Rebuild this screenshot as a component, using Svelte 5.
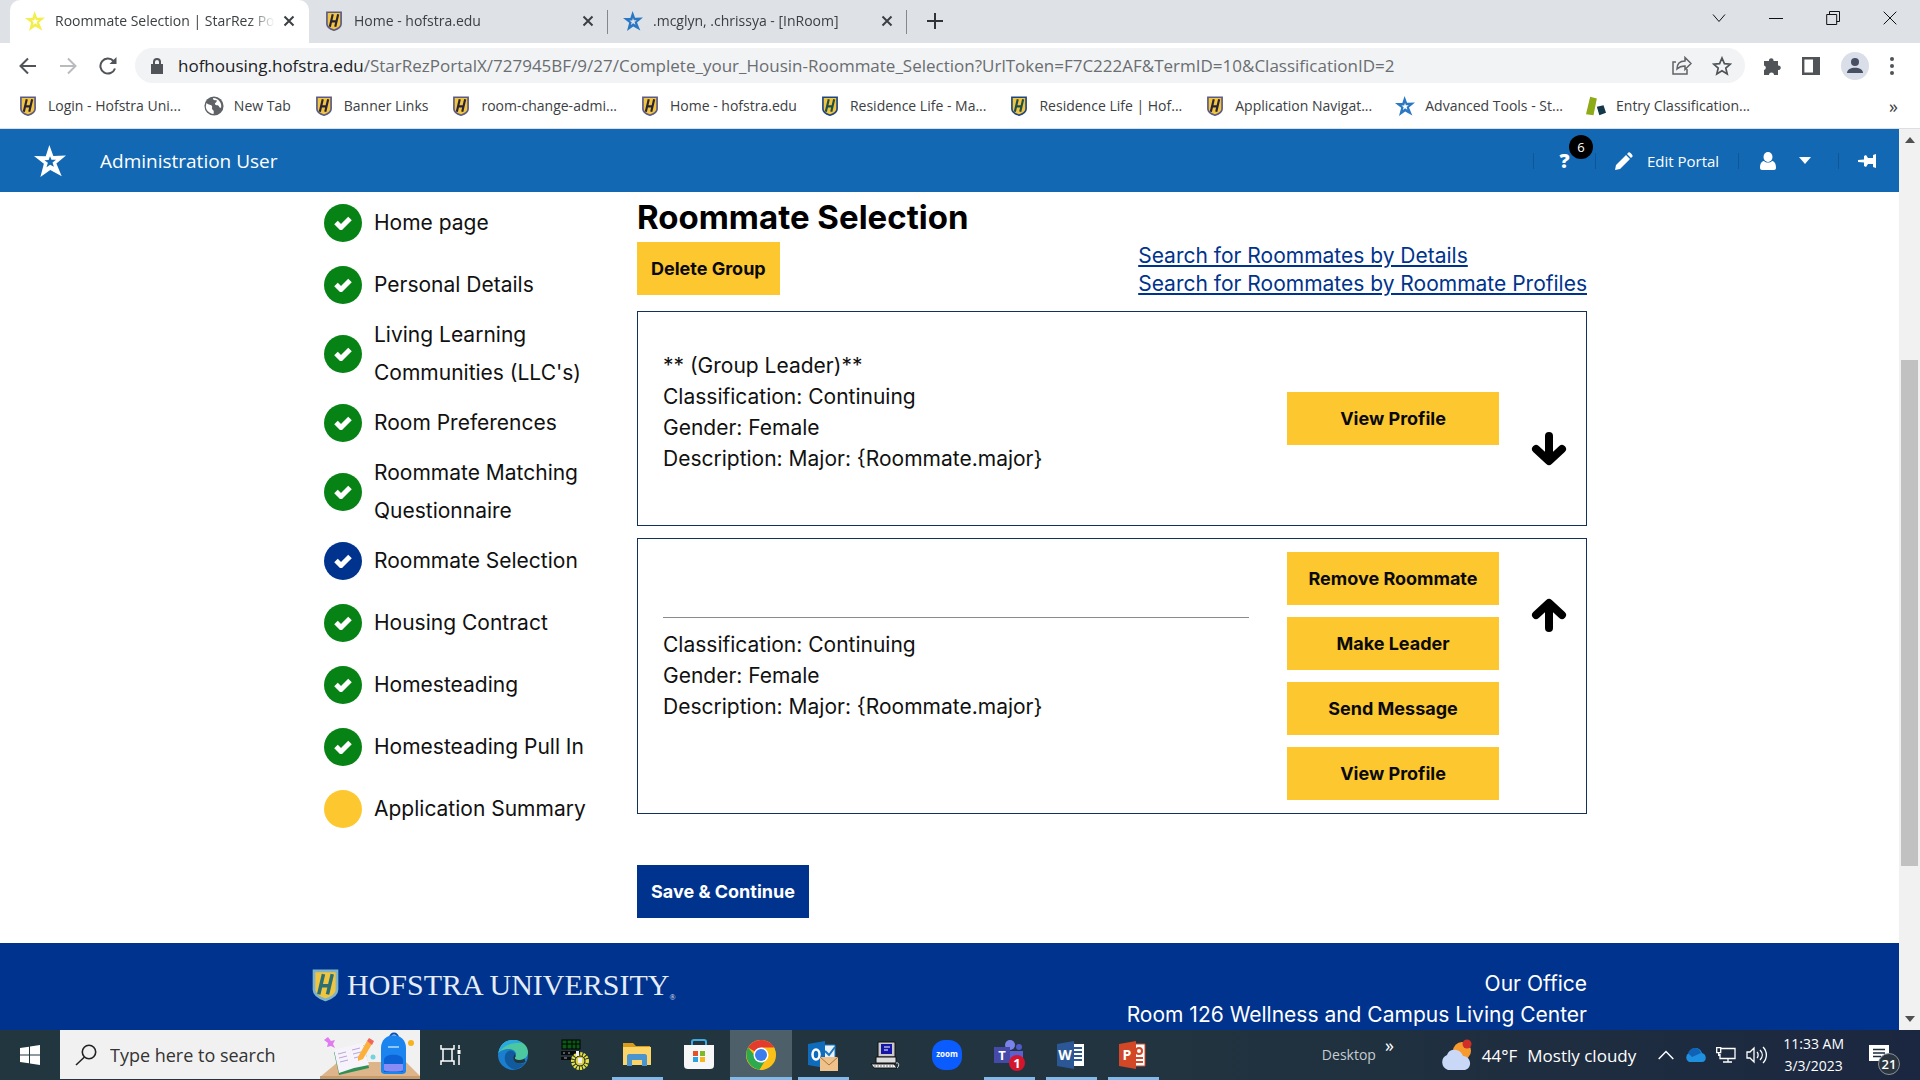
<script>
  /**
   * Housing portal — roommate selection step, shown in a desktop browser
   * window with the taskbar docked under it.
   */
  const tabs = [
    { title: 'Roommate Selection | StarRez Po', icon: 'star-yellow', active: true },
    { title: 'Home - hofstra.edu', icon: 'shield' },
    { title: '.mcglyn, .chrissya - [InRoom]', icon: 'star-blue' },
  ];

  const bookmarks = [
    { label: 'Login - Hofstra Uni...', icon: 'shield' },
    { label: 'New Tab', icon: 'globe' },
    { label: 'Banner Links', icon: 'shield' },
    { label: 'room-change-admi...', icon: 'shield' },
    { label: 'Home - hofstra.edu', icon: 'shield' },
    { label: 'Residence Life - Ma...', icon: 'shield-blue' },
    { label: 'Residence Life | Hof...', icon: 'shield-blue' },
    { label: 'Application Navigat...', icon: 'shield' },
    { label: 'Advanced Tools - St...', icon: 'star-blue' },
    { label: 'Entry Classification...', icon: 'blocks' },
  ];

  const steps = [
    { label: 'Home page', state: 'done' },
    { label: 'Personal Details', state: 'done' },
    { label: "Living Learning Communities (LLC's)", state: 'done' },
    { label: 'Room Preferences', state: 'done' },
    { label: 'Roommate Matching Questionnaire', state: 'done' },
    { label: 'Roommate Selection', state: 'current' },
    { label: 'Housing Contract', state: 'done' },
    { label: 'Homesteading', state: 'done' },
    { label: 'Homesteading Pull In', state: 'done' },
    { label: 'Application Summary', state: 'todo' },
  ];

  const details = [
    'Classification: Continuing',
    'Gender: Female',
    'Description: Major: {Roommate.major}',
  ];

  const roommates = [
    { leader: true, actions: ['View Profile'] },
    { leader: false, actions: ['Remove Roommate', 'Make Leader', 'Send Message', 'View Profile'] },
  ];

  const apps = [
    { name: 'Task View' },
    { name: 'Edge' },
    { name: 'Session Manager' },
    { name: 'File Explorer', open: true },
    { name: 'Store' },
    { name: 'Chrome', open: true, focused: true },
    { name: 'Outlook', open: true },
    { name: 'Terminal' },
    { name: 'Zoom' },
    { name: 'Teams', open: true },
    { name: 'Word', open: true },
    { name: 'PowerPoint', open: true },
  ];

  const starColors = { 'star-yellow': '#f3ee4a', 'star-blue': '#2a78c4' };
</script>

{#snippet star(color)}
  <svg class="fill" viewBox="0 0 24 24" fill={color} aria-hidden="true">
    <path fill-rule="evenodd" d="M11.500 0l3 8.200 9.500-.4-7.200 6 4 9.700-8.600-4.800-7.400 5.300 2.600-10L0 8.300l8.800.2zM12 8.500l-1 2.800-3.200.2 2.600 1.900-1 3.300 2.700-1.900 2.800 1.600-1-3.200 2.600-2.100-3.400-.1z" />
  </svg>
{/snippet}

{#snippet shield(rim, letter)}
  <svg class="fill" viewBox="0 0 20 24" aria-hidden="true">
    <path d="M1.500 1.500h17v14c0 4-4 6-8.500 7.500-4.500-1.500-8.500-3.500-8.500-7.500z" fill="#f0c540" stroke={rim} stroke-width="2" />
    <path d="M8.500 4L5 19M15 4l-3.500 15M7 12.500h6" fill="none" stroke={letter} stroke-width="2.600" />
  </svg>
{/snippet}

{#snippet favicon(icon)}
  <span class="favicon">
    {#if icon.startsWith('star')}
      {@render star(starColors[icon])}
    {:else if icon === 'shield'}
      {@render shield('#5d5a86', '#2a2238')}
    {:else if icon === 'shield-blue'}
      {@render shield('#21467f', '#1f4f4a')}
    {:else if icon === 'globe'}
      <svg class="fill" viewBox="0 0 24 24" aria-hidden="true">
        <circle cx="12" cy="12" r="11.500" fill="#5f6368" />
        <path d="M3 8.500c3 3 5.500 1.500 6.500 3.500s-1 3 1 4.500 1 3.500 1 5C6 21 2 17 2.200 12zM11 2.500c-1 2 1.500 3 3 2.500s2 2 0 3-.5 3 2 3 2 4 4.500 3c1.200-5-2.500-11-9.500-11.500z" fill="#fff" />
      </svg>
    {:else}
      <svg class="fill" viewBox="0 0 24 24" aria-hidden="true">
        <path d="M5 1l8 2-4 20-9-1z" fill="#8cab17" />
        <path d="M13 13l8-2 3 9-8 3z" fill="#12384a" />
      </svg>
    {/if}
  </span>
{/snippet}

{#snippet cross()}
  <svg width="12" height="12" viewBox="0 0 12 12" aria-hidden="true">
    <path d="M1.500 1.500l9 9M10.500 1.500l-9 9" stroke="#3c4043" stroke-width="2" />
  </svg>
{/snippet}

{#snippet appIcon(name)}
  <svg width="32" height="32" viewBox="0 0 32 32" aria-hidden="true">
    {#if name === 'Task View'}
      <path d="M6 6v4h13V6M6 26v-4h13v4M8 10v12M17 10v12M24 6v4M24 16v10" fill="none" stroke="#fff" stroke-width="1.500" />
      <rect x="22.500" y="11" width="3" height="4" fill="#fff" />
    {:else if name === 'Edge'}
      <circle cx="16" cy="16" r="15" fill="#1b7fd0" />
      <path d="M1.500 14C3 5 9 1 16 1c9 0 15 6 15 12 0 5-4 8-9 8-3 0-5-1-4-2.500 3-4-.5-8.500-6-8.500-5 0-9 2-10.500 4z" fill="#4cc7a0" />
      <path d="M1.500 14C3 5 9 1 16 1c4 0 7 1 9.500 3.500C18 3 7 5 1.500 14z" fill="#2aa8e0" />
      <path d="M18 18.500c2-4-1-7-5-7-4 1-6 5-5 10 1 4 5 8 10 9 4-1 8-3 10-6.500-5 2-11 .5-10-5.500z" fill="#125a9e" />
      <path d="M18 18.500c-.5 1.500 1 2.500 4 2.500 2 0 4-.5 5.500-1.500l1 3.500c-6 3-13 1-12-5 .5-1 1-2 .5-3 1 .5 2 2 1 3.500z" fill="#22363f" />
    {:else if name === 'Session Manager'}
      <rect x="3" y="1" width="18" height="9" fill="#0b5a16" stroke="#000" />
      <path d="M8 1v9M13 1v9M17 1v9M3 5h18" stroke="#000" />
      <path d="M2 12h19v4H2zM2 18h10v3H2z" fill="#0a0a0a" />
      <path d="M4 14h2M9 14h2M5 19h3" stroke="#aaa" />
      <circle cx="21" cy="22" r="7" fill="none" stroke="#e8e23a" stroke-width="4" stroke-dasharray="2 1" />
      <circle cx="21" cy="22" r="5" fill="#d9d04a" stroke="#222" />
      <rect x="17" y="12" width="3" height="5" fill="#eee" />
      <rect x="19" y="19" width="4" height="5" fill="#eee" />
    {:else if name === 'File Explorer'}
      <path d="M2 4h10l3 3h14v6H2z" fill="#d99b1c" />
      <rect x="2" y="8" width="28" height="18" fill="#fbd56a" />
      <path d="M6 17c0-1 1-2 2-2h16c1 0 2 1 2 2v10h-5v-6H11v6H6z" fill="#4a94d0" />
    {:else if name === 'Store'}
      <path d="M9 7V3c0-1 .5-2 2-2h10c1.500 0 2 1 2 2v4" fill="none" stroke="#3fa9e0" stroke-width="2" />
      <path d="M1 6h30v20c0 3-1.500 4-4 4H5c-2.500 0-4-1-4-4z" fill="#f7f7f7" />
      <path d="M10 12h5v5h-5z" fill="#e5512b" /><path d="M17 12h5v5h-5z" fill="#7db928" />
      <path d="M10 18h5v5h-5z" fill="#2fa3e0" /><path d="M17 18h5v5h-5z" fill="#f6b61c" />
    {:else if name === 'Chrome'}
      <circle cx="16" cy="16" r="15" fill="#fbc116" />
      <path d="M16 16L3 8.500C6 4 10.500 1 16 1s10.500 3 13 7.500z" fill="#e33b2e" />
      <path d="M3 8.500C-1 16 2 28 14.500 31L21 20l-9-1z" fill="#2da94f" />
      <path d="M16 8.500h13.200C33 17 29 30 14.500 31L22 19z" fill="#fbc116" />
      <circle cx="16" cy="16" r="7.500" fill="#fff" /><circle cx="16" cy="16" r="6" fill="#3b7ded" />
    {:else if name === 'Outlook'}
      <path d="M14 6h14v14H14z" fill="#e9f2fa" stroke="#1a78c2" />
      <path d="M18 12l4 4 6-8" fill="none" stroke="#1a78c2" stroke-width="2" />
      <path d="M1 5l17-3v27L1 26z" fill="#0f6cbd" />
      <ellipse cx="9" cy="15.500" rx="3.500" ry="5" fill="none" stroke="#fff" stroke-width="2.500" />
      <path d="M13 18h18v14H13z" fill="#eec28a" /><path d="M13 18l9 8 9-8" fill="none" stroke="#a9743a" />
    {:else if name === 'Terminal'}
      <path d="M9 3h17v15H9z" fill="#c9c9c9" stroke="#111" />
      <path d="M12 5h11v10H12z" fill="#1515a8" /><path d="M15 8h6M15 11h4" stroke="#fff" />
      <path d="M7 18h20v6H7z" fill="#ddd" stroke="#111" />
      <path d="M2 25h23l3 4H5z" fill="#f4f4f4" stroke="#111" />
      <path d="M5 27h19" stroke="#777" stroke-dasharray="2 1" /><path d="M27 24c4-1 3 4 1 5" stroke="#ddd" fill="none" />
    {:else if name === 'Zoom'}
      <rect x="1" y="1" width="30" height="30" rx="13" fill="#0b5cff" />
      <text x="16" y="18" text-anchor="middle" class="icon-word">zoom</text>
    {:else if name === 'Teams'}
      <circle cx="17" cy="6" r="5" fill="#7b83eb" /><circle cx="26" cy="8" r="3" fill="#5059c9" />
      <path d="M14 12h16v9c0 5-14 8-16 0z" fill="#5b62d0" />
      <path d="M1 8h16v16H1z" fill="#4549a8" />
      <text x="9" y="21" text-anchor="middle" class="icon-letter small">T</text>
      <circle cx="24" cy="24" r="8" fill="#d5152e" />
      <text x="24" y="29" text-anchor="middle" class="icon-letter small">1</text>
    {:else if name === 'Word'}
      <path d="M16 5h13v22H16z" fill="#fff" /><path d="M19 9h8M19 13h8M19 17h8M19 21h8" stroke="#2b5797" stroke-width="2" />
      <path d="M2 5l17-3v28L2 27z" fill="#2b5797" />
      <text x="10" y="21" text-anchor="middle" class="icon-letter">W</text>
    {:else}
      <path d="M16 5h12v22H16z" fill="#fff" stroke="#d24726" /><circle cx="22" cy="12" r="3" fill="none" stroke="#d24726" stroke-width="2" />
      <path d="M19 19h7M19 23h7" stroke="#d24726" stroke-width="2" />
      <path d="M2 5l17-3v28L2 27z" fill="#d24726" />
      <text x="10" y="21" text-anchor="middle" class="icon-letter">P</text>
    {/if}
  </svg>
{/snippet}

<div class="desktop">
  <div class="tab-strip">
    <div class="tabs" role="tablist" aria-label="Open tabs">
      {#each tabs as t}
        <div class="tab" class:tab-active={t.active}>
          {@render favicon(t.icon)}
          <button class="tab-title" role="tab" aria-selected={!!t.active}>{t.title}</button>
          <button class="plain" aria-label="Close tab">{@render cross()}</button>
        </div>
      {/each}
      <button class="plain new-tab" aria-label="New tab">
        <svg width="16" height="16" viewBox="0 0 16 16"><path d="M8 0v16M0 8h16" stroke="#303438" stroke-width="2" /></svg>
      </button>
    </div>
    <div class="window-controls">
      <button class="plain" aria-label="Search tabs"><svg width="14" height="14" viewBox="0 0 14 14"><path d="M1 3.500l6 7 6-7" /></svg></button>
      <button class="plain" aria-label="Minimize"><svg width="14" height="14" viewBox="0 0 14 14"><path d="M0 7.500h14" /></svg></button>
      <button class="plain" aria-label="Restore"><svg width="14" height="14" viewBox="0 0 14 14"><path d="M.7 3.500h10v10h-10zM3.500 3.500v-3h10v10h-3" /></svg></button>
      <button class="plain" aria-label="Close"><svg width="14" height="14" viewBox="0 0 14 14"><path d="M.7.7l12.600 12.600M13.300.7L.7 13.300" /></svg></button>
    </div>
  </div>

  <div class="toolbar">
    <div class="nav-buttons">
      <button class="plain" aria-label="Back"><svg width="18" height="18" viewBox="0 0 18 18" fill="none" stroke="#505357" stroke-width="2"><path d="M17 9H2M9 1.500L1.500 9 9 16.500" /></svg></button>
      <button class="plain" aria-label="Forward"><svg width="18" height="18" viewBox="0 0 18 18" fill="none" stroke="#b9bbbe" stroke-width="2"><path d="M1 9h15M9 1.500L16.500 9 9 16.500" /></svg></button>
      <button class="plain" aria-label="Reload"><svg width="18" height="18" viewBox="0 0 18 18" fill="none" stroke="#505357" stroke-width="2"><path d="M16 11.500A7.500 7.500 0 1 1 14.500 4" /><path d="M17.500 0v7h-7z" fill="#505357" stroke="none" /></svg></button>
    </div>
    <div class="omnibox">
      <svg width="12" height="16" viewBox="0 0 12 16"><path d="M0 6h12v10H0z" fill="#505357" /><path d="M3 6V4a3 3 0 0 1 6 0v2" fill="none" stroke="#505357" stroke-width="2" /></svg>
      <label for="url">hofhousing.hofstra.edu</label>
      <input id="url" type="text" value="/StarRezPortalX/727945BF/9/27/Complete_your_Housin-Roommate_Selection?UrlToken=F7C222AF&TermID=10&ClassificationID=2" />
      <button class="plain" aria-label="Share"><svg width="20" height="20" viewBox="0 0 20 20" fill="none" stroke="#606367" stroke-width="1.500"><path d="M4 6H1v12h14v-5M5 13c0-5 3-8 8-8V1.500l6 6-6 6V10c-4 0-6 1-8 3z" /></svg></button>
      <button class="plain" aria-label="Bookmark this page"><svg width="20" height="20" viewBox="0 0 20 20" fill="none" stroke="#505357" stroke-width="1.700"><path d="M10 2l2.400 5.600 6 .5-4.600 4 1.400 5.900-5.200-3.200L4.800 18l1.400-5.900-4.600-4 6-.5z" /></svg></button>
    </div>
    <div class="tool-buttons">
      <button class="plain" aria-label="Extensions"><svg width="18" height="18" viewBox="0 0 18 18"><path d="M1 4h5a2.300 2.300 0 1 1 4.500 0H15v4.500a2.300 2.300 0 1 1 0 4.500v5h-4a2.400 2.400 0 0 0-5 0H1v-5a2.300 2.300 0 0 0 0-4.500z" fill="#505357" /></svg></button>
      <button class="plain" aria-label="Side panel"><svg width="18" height="18" viewBox="0 0 18 18"><path d="M1.200 1.200h15.600v15.600H1.200z" fill="none" stroke="#505357" stroke-width="2.400" /><path d="M11 1h6v16h-6z" fill="#505357" /></svg></button>
      <button class="plain" aria-label="Profile"><svg width="28" height="28" viewBox="0 0 28 28"><circle cx="14" cy="14" r="14" fill="#dadee8" /><circle cx="14" cy="10" r="4" fill="#474f63" /><path d="M6 21c0-7 16-7 16 0z" fill="#474f63" /></svg></button>
      <button class="plain" aria-label="Menu"><svg width="4" height="18" viewBox="0 0 4 18" fill="#505357"><circle cx="2" cy="2" r="2" /><circle cx="2" cy="9" r="2" /><circle cx="2" cy="16" r="2" /></svg></button>
    </div>
  </div>

  <nav class="bookmarks" aria-label="Bookmarks">
    {#each bookmarks as b}
      <a href="#bookmark">{@render favicon(b.icon)}{b.label}</a>
    {/each}
    <button class="plain more" aria-label="More bookmarks">»</button>
  </nav>

  <div class="viewport">
    <div class="page">
      <header class="portal-bar">
        <span class="portal-logo">{@render star('#fff')}</span>
        <span class="user-name">Administration User</span>
        <div class="portal-tools">
          <button class="plain help" aria-label="Help">?<span class="badge">6</span></button>
          <button class="plain edit">
            <svg width="18" height="18" viewBox="0 0 18 18" fill="#fff"><path d="M0 18l1-5L11 3l4 4L5 17zM12 2l1.500-1.500c1-1 5 3 4 4L16 6z" /></svg>
            Edit Portal
          </button>
          <button class="plain account" aria-label="Account">
            <svg width="16" height="18" viewBox="0 0 16 18" fill="#fff"><ellipse cx="8" cy="5" rx="4.500" ry="5" /><path d="M0 16c0-5 2-7 4-7 2 2 6 2 8 0 2 0 4 2 4 7 0 1-1 2-2 2H2c-1 0-2-1-2-2z" /></svg>
            <svg width="12" height="7" viewBox="0 0 12 7" fill="#fff"><path d="M0 0h12L6 7z" /></svg>
          </button>
          <button class="plain pin" aria-label="Pin">
            <svg width="18" height="14" viewBox="0 0 18 14" fill="#fff"><path d="M0 6l6-.5V2l2-1 2 3h5V1l3-1v14l-3-1v-3h-5l-2 3-2-1V8.500L0 8z" /></svg>
          </button>
        </div>
      </header>

      <div class="container columns">
        <nav aria-label="Application steps">
          <ol class="steps">
            {#each steps as step}
              <li>
                <span class="step-dot {step.state}">
                  {#if step.state !== 'todo'}
                    <svg width="18" height="14" viewBox="0 0 18 14"><path d="M2 6.500L7 11.500 16 2.500" fill="none" stroke="#fff" stroke-width="5" /></svg>
                  {/if}
                </span>
                <a href="#step">{step.label}</a>
              </li>
            {/each}
          </ol>
        </nav>

        <main>
          <h1>Roommate Selection</h1>
          <div class="group-actions">
            <button class="btn">Delete Group</button>
            <div class="search-links">
              <a href="#details">Search for Roommates by Details</a>
              <a href="#profiles">Search for Roommates by Roommate Profiles</a>
            </div>
          </div>

          {#each roommates as mate}
            <section class="card" class:card-leader={mate.leader}>
              <div class="info">
                {#if mate.leader}
                  <p>** (Group Leader)**</p>
                {:else}
                  <hr />
                {/if}
                {#each details as line}
                  <p>{line}</p>
                {/each}
              </div>
              <div class="actions">
                {#each mate.actions as action}
                  <button class="btn">{action}</button>
                {/each}
              </div>
              <button class="plain move" class:move-down={mate.leader} aria-label={mate.leader ? 'Move down' : 'Move up'}>
                <svg width="36" height="34" viewBox="0 0 36 34">
                  <path d={mate.leader ? 'M18 4v24M5 17l13 12 13-12' : 'M18 30V6M5 17L18 5l13 12'} fill="none" stroke="#000" stroke-width="8" stroke-linecap="round" stroke-linejoin="round" />
                </svg>
              </button>
            </section>
          {/each}

          <button class="btn btn-save">Save & Continue</button>
        </main>
      </div>

      <footer>
        <div class="container footer-row">
          <div class="wordmark">
            <span class="crest">{@render shield('#7fb3c8', '#2b6f74')}</span>
            HOFSTRA UNIVERSITY<small>®</small>
          </div>
          <address>
            <p>Our Office</p>
            <p>Room 126 Wellness and Campus Living Center</p>
          </address>
        </div>
      </footer>
    </div>
    <div class="scrollbar" aria-hidden="true">
      <svg width="10" height="6" viewBox="0 0 10 6"><path d="M0 6h10L5 0z" fill="#505050" /></svg>
      <div class="track"><div class="thumb"></div></div>
      <svg width="10" height="6" viewBox="0 0 10 6"><path d="M0 0h10L5 6z" fill="#505050" /></svg>
    </div>
  </div>

  <div class="taskbar">
    <button class="plain start" aria-label="Start">
      <svg width="20" height="20" viewBox="0 0 20 20" fill="#fff"><path d="M0 3l9-1.300V9.500H0zM10 1.500L20 0v9.500H10zM0 10.500h9v7.800L0 17zM10 10.500h10V20l-10-1.500z" /></svg>
    </button>
    <div class="search">
      <svg width="22" height="22" viewBox="0 0 22 22" fill="none" stroke="#222" stroke-width="1.600"><circle cx="14" cy="8" r="6.700" /><path d="M9.500 13L1 21" /></svg>
      <input type="text" placeholder="Type here to search" aria-label="Type here to search" />
      <svg width="100" height="49" viewBox="0 0 100 49" aria-hidden="true">
        <path d="M18 32h68l14 14v3H0v-2z" fill="#deb58b" /><path d="M0 46h100v3H0z" fill="#c99b6c" />
        <path d="M8 7l3 4 4-1-2 4 2 4-4-2-4 1 1-4-4-3z" fill="#e07af0" />
        <path d="M14 22l30-7 5 23-30 7z" fill="#2f8f55" /><path d="M14 20l15-4 5 22-15 5zM29 16l14-3 6 22-15 3z" fill="#f7f3fb" />
        <path d="M18 24l8-2M19 28l8-2M20 32l8-2M32 20l8-2M33 24l8-2M34 28l8-2" stroke="#b9a5d8" />
        <path d="M38 27l9-16 5 3-9 15-5 2z" fill="#fbb03b" /><path d="M47 11l2-3 5 3-2 4z" fill="#f0665b" />
        <circle cx="53" cy="27" r="2.500" fill="#6fd4e0" /><circle cx="91" cy="13" r="3" fill="#f6b31c" />
        <path d="M70 8c0-6 8-6 8 0" fill="none" stroke="#0c4fb5" stroke-width="2" />
        <path d="M61 18c0-17 25-17 25 0v23c0 2-2 3-4 3H65c-2 0-4-1-4-3z" fill="#1b84ee" />
        <path d="M64 30c0-7 19-7 19 0v12H64z" fill="#0d62d6" /><path d="M64 34h19v6c0 2-19 2-19 0z" fill="#8a8cf5" />
        <path d="M68 17h11" stroke="#8cc6ff" stroke-width="2" />
      </svg>
    </div>
    <div class="apps">
      {#each apps as app}
        <button class="plain app" class:app-open={app.open} class:app-focused={app.focused} aria-label={app.name}>
          {@render appIcon(app.name)}
        </button>
      {/each}
    </div>
    <div class="tray">
      <span class="desktop-label">Desktop <b>»</b></span>
      <span class="weather">
        <svg width="32" height="32" viewBox="0 0 32 32" aria-hidden="true"><circle cx="22" cy="12" r="9" fill="#f79a2e" /><circle cx="27" cy="5" r="4.500" fill="#cf2f26" /><path d="M8 31a8 8 0 0 1-1-15c2-7 13-7 16 1 8 0 10 12 2 14z" fill="#c8d8f6" /></svg>
        <span>44°F</span>
        <span>Mostly cloudy</span>
      </span>
      <span class="status">
        <svg width="16" height="10" viewBox="0 0 16 10" fill="none" stroke="#fff" stroke-width="1.500"><path d="M.7 9L8 1.500 15.300 9" /></svg>
        <svg width="22" height="14" viewBox="0 0 22 14"><path d="M5 14a5 5 0 0 1 0-9c3-7 11-6 13 0 5 1 5 9 0 9z" fill="#1f8fe0" /><path d="M4 5c3-7 11-6 13 0l-9 4z" fill="#0f62b5" /></svg>
        <svg width="20" height="16" viewBox="0 0 20 16" fill="none" stroke="#fff" stroke-width="1.300"><path d="M5 1.500h14v10H4V7M12 11.500V15M7 15h9M.7.7h4v5h-4zM2.700 5.700V9" /></svg>
        <svg width="22" height="18" viewBox="0 0 22 18" fill="none" stroke="#fff" stroke-width="1.300"><path d="M1 6h3l4-4v14l-4-4H1zM11 6c1.500 1.500 1.500 4.500 0 6M14 4c3 3 3 7 0 10M17 1c4.500 4.500 4.500 11.500 0 16" /></svg>
      </span>
      <span class="clock"><span>11:33 AM</span><span>3/3/2023</span></span>
      <button class="plain notes" aria-label="Notifications">
        <svg width="20" height="20" viewBox="0 0 20 20"><path d="M0 0h20v16h-6l-4 4v-4H0z" fill="#fff" /><path d="M4 4.500h12M4 8h12M4 11.500h8" stroke="#1c2a3c" stroke-width="1.500" /></svg>
        <span class="count">21</span>
      </button>
    </div>
  </div>
</div>

<style>
  :global(body) {
    margin: 0;
  }
  .desktop {
    --ui: 'Open Sans', 'Noto Sans', sans-serif;
    --brand: Inter, 'Liberation Sans', sans-serif;
    display: flex;
    flex-direction: column;
    height: 100vh;
    overflow: hidden;
    font-family: var(--ui);
    background: #fff;
  }
  .desktop :global(svg) {
    display: block;
    flex: none;
  }
  .fill {
    width: 100%;
    height: 100%;
  }
  button {
    font-family: inherit;
    cursor: pointer;
  }
  .plain {
    display: flex;
    align-items: center;
    justify-content: center;
    padding: 0;
    border: none;
    background: none;
  }
  p {
    margin: 0;
  }

  /* browser chrome */
  .tab-strip {
    display: flex;
    justify-content: space-between;
    flex: none;
    height: 43px;
    padding: 0 23px 0 10px;
    background: #dee1e6;
  }
  .tabs {
    display: flex;
  }
  .tab {
    display: flex;
    align-items: center;
    gap: 8px;
    box-sizing: border-box;
    width: 299px;
    padding: 0 14px 2px 15px;
    background: linear-gradient(#84888d, #84888d) no-repeat right 10px / 1px 24px;
  }
  .tab-active {
    border-radius: 10px 10px 0 0;
    background: #fff;
  }
  .favicon {
    flex: none;
    width: 20px;
    height: 20px;
  }
  .tab-title {
    flex: 1;
    min-width: 0;
    padding: 0 0 0 2px;
    border: none;
    background: none;
    overflow: hidden;
    text-align: left;
    white-space: nowrap;
    font-size: 14px;
    color: #3c4043;
    mask-image: linear-gradient(to right, #000 88%, transparent);
  }
  .new-tab {
    width: 56px;
    padding-bottom: 2px;
  }
  .window-controls {
    display: flex;
    gap: 43px;
    padding-bottom: 7px;
    fill: none;
    stroke: #111;
  }
  .toolbar {
    display: flex;
    align-items: center;
    flex: none;
    height: 45px;
    padding: 0 26px 0 19px;
  }
  .nav-buttons {
    display: flex;
    gap: 22px;
    width: 116px;
  }
  .omnibox {
    display: flex;
    align-items: center;
    flex: 1;
    height: 35px;
    padding: 0 13px 0 16px;
    border-radius: 18px;
    background: #f1f3f4;
    font-size: 17px;
  }
  .omnibox label {
    padding-left: 15px;
    color: #202124;
  }
  .omnibox input {
    flex: 1;
    min-width: 0;
    padding: 0;
    border: none;
    outline: none;
    background: none;
    font: inherit;
    color: #6a6d71;
  }
  .omnibox button {
    margin-left: 20px;
  }
  .tool-buttons {
    display: flex;
    align-items: center;
    gap: 21px;
    padding-left: 18px;
  }
  .bookmarks {
    display: flex;
    align-items: center;
    gap: 23px;
    flex: none;
    box-sizing: border-box;
    height: 41px;
    padding: 0 22px 5px 18px;
    border-bottom: 1px solid #dcdee1;
  }
  .bookmarks a {
    display: flex;
    align-items: center;
    gap: 10px;
    font-size: 14px;
    white-space: nowrap;
    color: #3c4043;
    text-decoration: none;
  }
  .more {
    margin-left: auto;
    font-size: 18px;
    color: #3c4043;
  }
  .viewport {
    display: flex;
    flex: 1;
    min-height: 0;
  }
  .page {
    flex: 1;
    min-width: 0;
    overflow: hidden;
    font-family: var(--brand);
  }
  .scrollbar {
    display: flex;
    flex-direction: column;
    align-items: center;
    gap: 8px;
    width: 21px;
    padding: 8px 0;
    box-sizing: border-box;
    background: #f1f1f1;
  }
  .track {
    flex: 1;
    width: 17px;
  }
  .thumb {
    height: 59%;
    margin-top: 209px;
    background: #c1c1c1;
  }

  /* portal bar */
  .portal-bar {
    display: flex;
    align-items: center;
    height: 63px;
    padding-left: 34px;
    background: #1268b3;
    color: #fff;
    font-family: var(--ui);
  }
  .portal-logo {
    width: 32px;
    height: 32px;
  }
  .user-name {
    padding-left: 34px;
    font-size: 19px;
  }
  .portal-tools {
    display: flex;
    align-items: center;
    margin-left: auto;
  }
  .portal-tools button {
    position: relative;
    height: 16px;
    border-left: 1px solid #0d5699;
    color: #fff;
  }
  .portal-tools .help {
    width: 62px;
    font-size: 20px;
    font-weight: 800;
  }
  .badge {
    position: absolute;
    left: 35px;
    top: -18px;
    width: 24px;
    height: 24px;
    border-radius: 50%;
    background: #000;
    font-size: 13px;
    font-weight: 400;
    line-height: 24px;
  }
  .portal-tools .edit {
    gap: 14px;
    width: 143px;
    font-size: 15px;
  }
  .portal-tools .account {
    gap: 23px;
    width: 100px;
    padding-right: 6px;
  }
  .portal-tools .pin {
    width: 61px;
    padding-right: 4px;
  }

  /* page body */
  .container {
    max-width: 1275px;
    margin: 0 auto;
  }
  .columns {
    display: grid;
    grid-template-columns: 325px 1fr;
  }
  .steps {
    margin: 0;
    padding: 0 20px 0 12px;
    list-style: none;
  }
  .steps li {
    display: flex;
    align-items: center;
    gap: 12px;
    min-height: 62px;
  }
  .steps a {
    font-size: 21px;
    line-height: 38px;
    color: #111;
    text-decoration: none;
  }
  .step-dot {
    display: flex;
    align-items: center;
    justify-content: center;
    flex: none;
    width: 38px;
    height: 38px;
    border-radius: 50%;
  }
  .done {
    background: #078316;
  }
  .current {
    background: #00338d;
  }
  .todo {
    background: #fdc82f;
  }
  h1 {
    margin: 0;
    font-size: 33px;
    line-height: 50px;
    font-weight: 700;
    color: #000;
  }
  .group-actions {
    display: flex;
    align-items: flex-start;
    justify-content: space-between;
    margin-bottom: 13px;
  }
  .search-links {
    display: flex;
    flex-direction: column;
    align-items: flex-start;
    font-size: 21px;
    line-height: 28px;
  }
  .search-links a {
    color: #00338d;
  }
  .btn {
    height: 53px;
    padding: 0 14px;
    border: none;
    background: #fdc82f;
    font-family: var(--brand);
    font-size: 18px;
    font-weight: 700;
    color: #0a0a0a;
  }
  .card {
    display: flex;
    gap: 38px;
    margin-bottom: 12px;
    padding: 13px 19px 13px 25px;
    border: 1px solid #12315c;
  }
  .card-leader {
    padding-top: 38px;
    padding-bottom: 38px;
  }
  .info {
    flex: 1;
    min-width: 0;
    min-height: 137px;
    font-size: 21px;
    line-height: 31px;
    color: #111;
  }
  hr {
    height: 1px;
    margin: 65px 0 11px;
    border: none;
    background: #8a8a8a;
  }
  .actions {
    display: flex;
    flex-direction: column;
    justify-content: center;
    gap: 12px;
    width: 212px;
  }
  .move {
    align-self: flex-start;
    margin: 46px 0 0 -6px;
  }
  .move-down {
    align-self: flex-end;
    margin: 0 0 21px -6px;
  }
  .btn-save {
    margin: 39px 0 25px;
    background: #00338d;
    color: #fff;
  }
  footer {
    min-height: 200px;
    background: #00338d;
    color: #fff;
  }
  .footer-row {
    display: flex;
    justify-content: space-between;
    padding-top: 25px;
  }
  .wordmark {
    display: flex;
    align-items: center;
    gap: 8px;
    height: 34px;
    font-family: 'Liberation Serif', serif;
    font-size: 30px;
    color: #e6edf8;
  }
  .wordmark small {
    align-self: flex-end;
    margin-left: -8px;
    font-size: 8px;
  }
  .crest {
    width: 27px;
    height: 34px;
  }
  address {
    font-size: 21px;
    font-style: normal;
    line-height: 31px;
    text-align: right;
  }

  /* taskbar */
  .taskbar {
    display: flex;
    flex: none;
    height: 50px;
    background: linear-gradient(to right, #22363f, #21343f 60%, #1b2740);
    color: #fff;
  }
  .start {
    flex: none;
    width: 60px;
  }
  .search {
    display: flex;
    align-items: center;
    flex: none;
    width: 345px;
    height: 49px;
    padding-left: 15px;
    background: #f1f1f1;
  }
  .search input {
    flex: 1;
    min-width: 0;
    padding: 0 0 0 13px;
    border: none;
    outline: none;
    background: none;
    font-family: inherit;
    font-size: 18px;
  }
  .search input::placeholder {
    color: #333;
  }
  .apps {
    display: flex;
  }
  .app {
    flex: none;
    width: 62px;
  }
  .app-open {
    background: linear-gradient(#83b9e8, #83b9e8) no-repeat center bottom / 51px 3px;
  }
  .app-focused {
    background: linear-gradient(#83b9e8, #83b9e8) no-repeat center bottom / 100% 3px #4d5f69;
  }
  .icon-word {
    font: 700 8px var(--ui);
    fill: #fff;
  }
  .icon-letter {
    font: 700 14px var(--ui);
    fill: #fff;
  }
  .icon-letter.small {
    font-size: 13px;
  }
  .tray {
    display: flex;
    align-items: center;
    margin-left: auto;
    padding-right: 21px;
    white-space: nowrap;
  }
  .desktop-label {
    display: flex;
    gap: 9px;
    padding-right: 46px;
    font-size: 14px;
    line-height: 20px;
    color: #c6cdd2;
  }
  .desktop-label b {
    align-self: flex-start;
    line-height: 1px;
    font-size: 18px;
    font-weight: 400;
    color: #fff;
  }
  .weather {
    display: flex;
    align-items: center;
    gap: 10px;
    padding-right: 22px;
    font-size: 17px;
  }
  .status {
    display: flex;
    align-items: center;
    gap: 10px;
    padding-right: 15px;
  }
  .clock {
    display: flex;
    flex-direction: column;
    align-items: center;
    padding-right: 25px;
    font-size: 14px;
    line-height: 22px;
  }
  .notes {
    position: relative;
    width: 30px;
    height: 30px;
    justify-content: flex-start;
  }
  .count {
    position: absolute;
    left: 9px;
    top: 13px;
    width: 20px;
    height: 20px;
    border: 1px solid #8a9299;
    border-radius: 50%;
    background: #2a3540;
    font-size: 13px;
    font-weight: 600;
    line-height: 20px;
    color: #fff;
  }
</style>
